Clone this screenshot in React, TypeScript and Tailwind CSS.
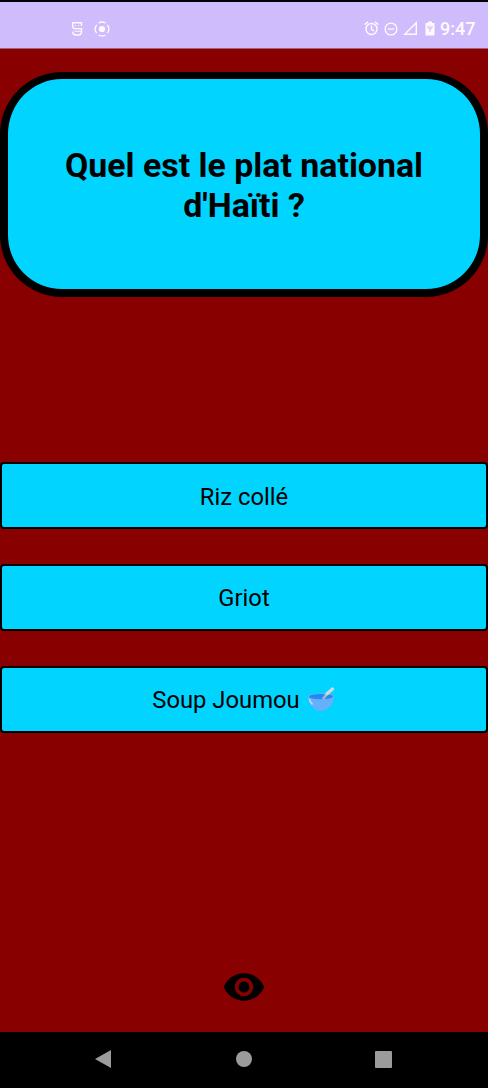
import type { ReactNode } from 'react';

function StatusBar() {
  return (
    <header className="flex h-[49px] shrink-0 items-center border-b border-t-2 border-b-[#a45f76] border-t-black bg-[#cfbcfd] pl-[71px] pr-[12px] pt-[7px] text-[#fffafb]">
      <svg width="12" height="16" viewBox="0 0 12 16" fill="none" stroke="currentColor" strokeWidth="1.4">
        <path d="M10.5 5V1.7H1.7V5.2Q1.7 7.6 4 7.6H10.5V10.5Q10.5 14 7.5 14H5Q1.9 14 1.7 10.6" />
        <path d="M3.8 4.7H5M7 4.7H8.2M3.5 10.2H10.5" strokeWidth="1" />
      </svg>
      <svg className="ml-[11px]" width="16" height="16" viewBox="0 0 16 16" fill="none" stroke="currentColor" strokeWidth="1.3">
        <circle cx="8" cy="8" r="3.1" fill="currentColor" stroke="none" />
        <path d="M4.5 2A7 7 0 0 1 11.5 2M13.3 3.8A6.8 6.8 0 0 1 13.3 12.2M11.5 14A7 7 0 0 1 4.5 14M2.7 12.2A6.8 6.8 0 0 1 2.7 3.8" />
      </svg>
      <div className="ml-auto flex items-center">
        <svg width="15" height="16" viewBox="0 0 15 16" fill="none" stroke="currentColor" strokeWidth="1.4">
          <circle cx="7.5" cy="8" r="5.5" />
          <path d="M7.5 4.6V8.4L10 9.9M.7 3.6L4 .9M14.3 3.6L11 .9" />
        </svg>
        <svg className="ml-[5px]" width="14" height="14" viewBox="0 0 14 14" fill="none" stroke="currentColor" strokeWidth="1.3">
          <circle cx="7" cy="7" r="5.9" />
          <path d="M3.6 7H10.4" />
        </svg>
        <svg className="ml-[5px]" width="15" height="15" viewBox="0 0 15 15" fill="none" stroke="currentColor" strokeWidth="1.4">
          <path d="M1.7 13.2H13.3V1.7Z" />
        </svg>
        <svg className="ml-[7px]" width="10" height="15" viewBox="0 0 10 15">
          <path fill="currentColor" d="M3 .5H7V2H9.5V14.5H.5V2H3Z" />
          <path d="M5 4.5V11M3 5V7L5 8.3L7 7V5" fill="none" stroke="#cfbcfd" strokeWidth="1" />
        </svg>
        <span className="ml-[5px] w-[36px] whitespace-nowrap text-[18px] font-medium leading-[20px]">9:47</span>
      </div>
    </header>
  );
}

function Answer({ children }: { children: ReactNode }) {
  return (
    <button className="flex h-[67px] w-full items-center justify-center rounded-[4px] border-2 border-black bg-[#00d4ff] text-[23.8px] leading-[28px] text-black first:pt-[2px]">
      {children}
    </button>
  );
}

function Bowl() {
  return (
    <svg className="ml-[7px] mr-px" width="28" height="26" viewBox="0 0 28 26" role="img" aria-label="Bol">
      <path d="M.8 9Q1.2 17 7 21.5Q10 24 14 24Q18 24 21 21.5Q26.8 17 27.2 9Z" fill="#64b0fa" />
      <ellipse cx="14" cy="9" rx="13.2" ry="2.8" fill="#64b0fa" />
      <ellipse cx="14" cy="9.6" rx="12" ry="2.7" fill="#2189f5" />
      <path d="M16 12L21 5.5" stroke="#a3b8c2" strokeWidth="2.8" />
      <path d="M20 6.8L25.5 2" stroke="#cfd8dc" strokeWidth="3.2" strokeLinecap="round" />
      <path d="M2.3 12Q3 15 5.5 17.5" fill="none" stroke="#bbdefb" strokeWidth="1.5" />
    </svg>
  );
}

export default function App() {
  return (
    <div className="flex h-[1088px] w-[488px] flex-col bg-[#880000] font-['Roboto',sans-serif]">
      <StatusBar />
      <main className="flex flex-1 flex-col items-center pt-[23px]">
        <section className="flex h-[225px] w-full items-center justify-center rounded-[62px] border-8 border-t-[7px] border-black bg-[#00d4ff] pt-[3px]">
          <h1 className="text-center text-[33.9px] font-bold leading-[40px] text-black">
            Quel est le plat national
            <br />
            d'Haïti ?
          </h1>
        </section>
        <div className="mt-[165px] flex w-full flex-col gap-[35px]">
          <Answer>Riz collé</Answer>
          <Answer>Griot</Answer>
          <Answer>Soup Joumou<Bowl /></Answer>
        </div>
        <button className="mb-[23px] mt-auto" aria-label="Afficher">
          <svg width="44" height="44" viewBox="0 0 24 24" fill="black">
            <path d="M12 4.5C7 4.5 2.73 7.61 1 12c1.73 4.39 6 7.5 11 7.5s9.27-3.11 11-7.5c-1.73-4.39-6-7.5-11-7.5zM12 17c-2.76 0-5-2.24-5-5s2.24-5 5-5 5 2.24 5 5-2.24 5-5 5zm0-8c-1.66 0-3 1.34-3 3s1.34 3 3 3 3-1.34 3-3-1.34-3-3-3z" />
          </svg>
        </button>
      </main>
      <nav className="flex h-[56px] shrink-0 items-center justify-between bg-black pb-[2px] pl-[95px] pr-[96px] text-[#9b9b9d]">
        <svg width="16" height="18" viewBox="0 0 16 18" fill="currentColor"><path d="M0 9L16 0V18Z" /></svg>
        <span className="ml-px size-[16px] rounded-full bg-current" />
        <span className="size-[17px] rounded-[1px] bg-current" />
      </nav>
    </div>
  );
}
